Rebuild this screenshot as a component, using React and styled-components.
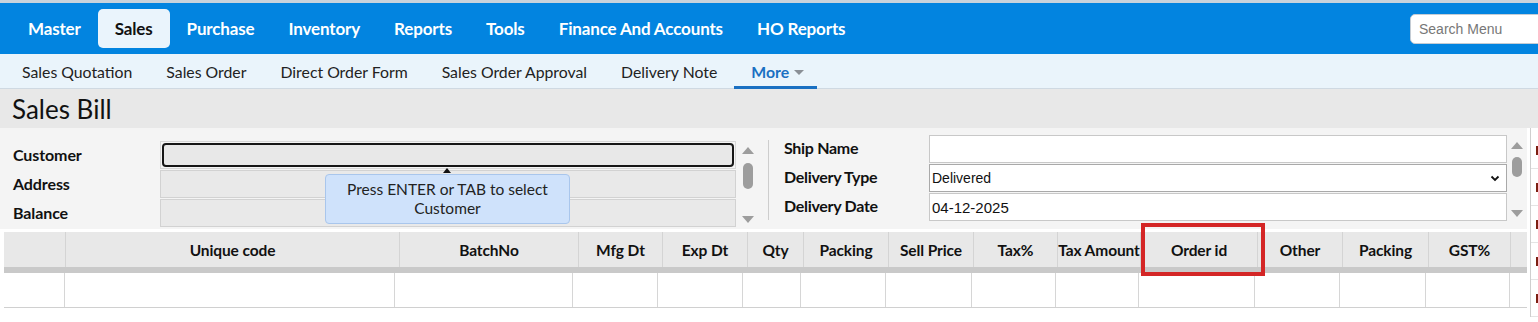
import React from 'react';
import styled, { createGlobalStyle } from 'styled-components';

const GlobalStyle = createGlobalStyle`
  html, body {
    margin: 0;
    padding: 0;
    background: #fff;
  }
  body {
    font-family: Lato, "Liberation Sans", sans-serif;
    color: #111;
  }
`;

const Page = styled.div`
  position: relative;
  width: 1538px;
  height: 322px;
  overflow: hidden;
  background: #fff;
`;

const TopBar = styled.div`
  display: flex;
  align-items: center;
  height: 51px;
  padding-left: 11px;
  border-top: 3px solid #c9d3dc;
  background: #0284e0;
`;

const MainItem = styled.div`
  display: flex;
  align-items: center;
  height: 39px;
  padding: 0 17px;
  border-radius: 5px;
  font-size: 17px;
  font-weight: 700;
  letter-spacing: -0.15px;
  color: ${p => (p.$active ? '#111' : '#fff')};
  background: ${p => (p.$active ? '#eaf4fc' : 'transparent')};
`;

const Search = styled.div`
  display: flex;
  align-items: center;
  flex-shrink: 0;
  width: 150px;
  height: 30px;
  margin-left: auto;
  margin-right: -22px;
  padding-left: 8px;
  box-sizing: border-box;
  border: 1px solid #c4ccd4;
  border-radius: 5px;
  background: #fff;
  font-family: "Liberation Sans", Arial, sans-serif;
  font-size: 14px;
  color: #777;
`;

const SubBar = styled.div`
  display: flex;
  height: 34px;
  padding-left: 5px;
  border-bottom: 1px solid #cfd9e2;
  background: #eaf4fb;
`;

const SubItem = styled.div`
  display: flex;
  align-items: center;
  padding: 0 ${p => (p.$active ? '13px 0 17px' : '17px')};
  font-size: 15.8px;
  color: ${p => (p.$active ? '#1a70c2' : '#222')};
  font-weight: ${p => (p.$active ? 700 : 400)};
  box-shadow: ${p => (p.$active ? 'inset 0 -3px 0 #1a70c2' : 'none')};
  margin-bottom: ${p => (p.$active ? '-1px' : '0')};
`;

const Caret = styled.span`
  width: 0;
  height: 0;
  margin-left: 5px;
  margin-top: 2px;
  border-left: 5px solid transparent;
  border-right: 5px solid transparent;
  border-top: 5px solid #8a8f96;
`;

const TitleBar = styled.div`
  display: flex;
  align-items: center;
  height: 39px;
  padding-left: 12px;
  background: #e8e8e8;
  font-size: 26px;
  color: #111;
`;

const Body = styled.div`
  display: flex;
`;

const Main = styled.div`
  width: 1527px;
  flex-shrink: 0;
`;

const FormArea = styled.div`
  display: flex;
  height: 101px;
  background: #f4f4f4;
`;

const FieldGrid = styled.div`
  display: grid;
  grid-template-columns: ${p => p.$cols};
  grid-auto-rows: ${p => p.$row}px;
  row-gap: 1px;
  align-items: center;
  align-self: flex-start;
  padding-left: ${p => p.$pl}px;
  margin-top: ${p => p.$top}px;
`;

const Label = styled.div`
  font-size: 16px;
  font-weight: 700;
  color: #111;
  letter-spacing: ${p => (p.$tight ? '-0.3px' : '-0.1px')};
  margin-bottom: ${p => (p.$tight ? '4px' : '2px')};
`;

const GreyInput = styled.div`
  height: 100%;
  box-sizing: border-box;
  border: 1px solid #d2d2d2;
  background: #e9e9e9;
`;

const FocusWrap = styled.div`
  height: 100%;
  box-sizing: border-box;
  padding: 1px;
  border: 1px solid #d6d6d6;
`;

const FocusInput = styled.div`
  height: 100%;
  box-sizing: border-box;
  border: 2px solid #161616;
  border-radius: 4px;
  background: #e8e8e8;
`;

const WhiteInput = styled.div`
  display: flex;
  align-items: center;
  justify-content: space-between;
  height: 100%;
  box-sizing: border-box;
  padding: 0 6px 0 2px;
  border: 1px solid ${p => (p.$select ? '#a9a9a9' : '#c8c8c8')};
  background: #fff;
  font-family: "Liberation Sans", Arial, sans-serif;
  font-size: ${p => (p.$select ? 14 : 15)}px;
  color: #111;
`;

const Scroll = styled.div`
  display: flex;
  flex-direction: column;
  align-items: center;
  align-self: flex-start;
  width: ${p => p.$w}px;
  height: ${p => p.$h}px;
  margin-left: ${p => p.$ml}px;
  margin-top: ${p => p.$top}px;
`;

const Arrow = styled.span`
  width: 0;
  height: 0;
  border-left: 6px solid transparent;
  border-right: 6px solid transparent;
  ${p => (p.$down ? 'border-top: 7px solid #9d9d9d;' : 'border-bottom: 7px solid #9d9d9d;')}
`;

const Thumb = styled.span`
  width: 10px;
  height: ${p => p.$h}px;
  margin-top: ${p => p.$mt}px;
  border-radius: 5px;
  background: #9d9d9d;
`;

const Grow = styled.span`
  flex: 1;
`;

const Divider = styled.div`
  align-self: flex-start;
  width: 1px;
  height: 80px;
  margin: 12px 0 0 14px;
  background: #cdcdcd;
`;

const Table = styled.div`
  margin: 3px 0 0 4px;
`;

const HeadRow = styled.div`
  display: flex;
  height: 35px;
  border-bottom: 6px solid #c9c9c9;
  background: #e8e8e8;
`;

const HeadCell = styled.div`
  display: flex;
  align-items: center;
  justify-content: center;
  flex-shrink: 0;
  width: ${p => p.$w}px;
  box-sizing: border-box;
  overflow: hidden;
  white-space: nowrap;
  border-right: ${p => (p.$last ? 'none' : '1px solid #d4d4d4')};
  font-size: 15.5px;
  font-weight: 700;
  letter-spacing: -0.1px;
  color: #111;
`;

const BodyRow = styled.div`
  display: flex;
  height: 34px;
  border-bottom: 1px solid #d0d0d0;
`;

const BodyCell = styled.div`
  flex-shrink: 0;
  width: ${p => p.$w}px;
  box-sizing: border-box;
  border-right: ${p => (p.$last ? 'none' : '1px solid #d6d6d6')};
`;

const Strip = styled.div`
  width: 7px;
  margin-left: 3px;
  padding-top: 4px;
  border-left: 1px solid #cfcfcf;
`;

const StripRow = styled.div`
  display: flex;
  align-items: center;
  justify-content: flex-end;
  height: 37px;
  box-sizing: border-box;
  border-bottom: 1px solid #e4e4e4;
`;

const Mark = styled.span`
  width: 2px;
  height: 9px;
  background: #7d1f12;
`;

const Tooltip = styled.div`
  position: absolute;
  left: 325px;
  top: 174px;
  width: 245px;
  height: 50px;
  box-sizing: border-box;
  display: flex;
  align-items: center;
  justify-content: center;
  border: 1px solid #a9c6ec;
  border-radius: 4px;
  background: #cfe2fb;
  font-size: 15.5px;
  line-height: 19px;
  text-align: center;
  color: #222;

  &::before {
    content: '';
    position: absolute;
    left: 117px;
    top: -7px;
    border-left: 4px solid transparent;
    border-right: 4px solid transparent;
    border-bottom: 5px solid #111;
  }
`;

const Highlight = styled.div`
  position: absolute;
  left: 1141px;
  top: 223px;
  width: 124px;
  height: 53px;
  box-sizing: border-box;
  border: 4px solid #d42626;
`;

const mainMenu = ['Master', 'Sales', 'Purchase', 'Inventory', 'Reports', 'Tools', 'Finance And Accounts', 'HO Reports'];
const subMenu = ['Sales Quotation', 'Sales Order', 'Direct Order Form', 'Sales Order Approval', 'Delivery Note'];

const headCols = [
  ['', 62], ['Unique code', 334], ['BatchNo', 179], ['Mfg Dt', 84], ['Exp Dt', 85],
  ['Qty', 56], ['Packing', 85], ['Sell Price', 85], ['Tax%', 84], ['Tax Amount', 83],
  ['Order id', 117], ['Other', 85], ['Packing', 86], ['GST%', 82], ['', 16],
];
const bodyCols = [61, 330, 178, 85, 85, 58, 85, 86, 84, 83, 116, 85, 86, 84, 17];

const Chevron = () => (
  <svg width="10" height="7" viewBox="0 0 10 7">
    <polyline points="1.5,1.5 5,5 8.5,1.5" fill="none" stroke="#111" strokeWidth="1.8" />
  </svg>
);

export default function App() {
  return (
    <Page>
      <GlobalStyle />
      <TopBar>
        {mainMenu.map(m => (
          <MainItem key={m} $active={m === 'Sales'}>{m}</MainItem>
        ))}
        <Search>Search Menu</Search>
      </TopBar>
      <SubBar>
        {subMenu.map(s => (
          <SubItem key={s}>{s}</SubItem>
        ))}
        <SubItem $active>
          More <Caret />
        </SubItem>
      </SubBar>
      <TitleBar>Sales Bill</TitleBar>
      <Body>
        <Main>
          <FormArea>
            <FieldGrid $cols="147px 576px" $row={28} $pl={13} $top={13}>
              <Label>Customer</Label>
              <FocusWrap>
                <FocusInput />
              </FocusWrap>
              <Label>Address</Label>
              <GreyInput />
              <Label>Balance</Label>
              <GreyInput />
            </FieldGrid>
            <Scroll $w={12} $h={76} $ml={6} $top={19}>
              <Arrow />
              <Thumb $h={26} $mt={9} />
              <Grow />
              <Arrow $down />
            </Scroll>
            <Divider />
            <FieldGrid $cols="145px 578px" $row={28} $pl={15} $top={7}>
              <Label $tight>Ship Name</Label>
              <WhiteInput />
              <Label $tight>Delivery Type</Label>
              <WhiteInput $select>
                Delivered
                <Chevron />
              </WhiteInput>
              <Label $tight>Delivery Date</Label>
              <WhiteInput>04-12-2025</WhiteInput>
            </FieldGrid>
            <Scroll $w={14} $h={75} $ml={3} $top={14}>
              <Arrow />
              <Thumb $h={20} $mt={8} />
              <Grow />
              <Arrow $down />
            </Scroll>
          </FormArea>
          <Table>
            <HeadRow>
              {headCols.map(([t, w], i) => (
                <HeadCell key={i} $w={w} $last={i === headCols.length - 1}>{t}</HeadCell>
              ))}
            </HeadRow>
            <BodyRow>
              {bodyCols.map((w, i) => (
                <BodyCell key={i} $w={w} $last={i === bodyCols.length - 1} />
              ))}
            </BodyRow>
          </Table>
        </Main>
        <Strip>
          {[0, 1, 2, 3, 4].map(i => (
            <StripRow key={i}>
              <Mark />
            </StripRow>
          ))}
        </Strip>
      </Body>
      <Tooltip>
        Press ENTER or TAB to select
        <br />
        Customer
      </Tooltip>
      <Highlight />
    </Page>
  );
}
